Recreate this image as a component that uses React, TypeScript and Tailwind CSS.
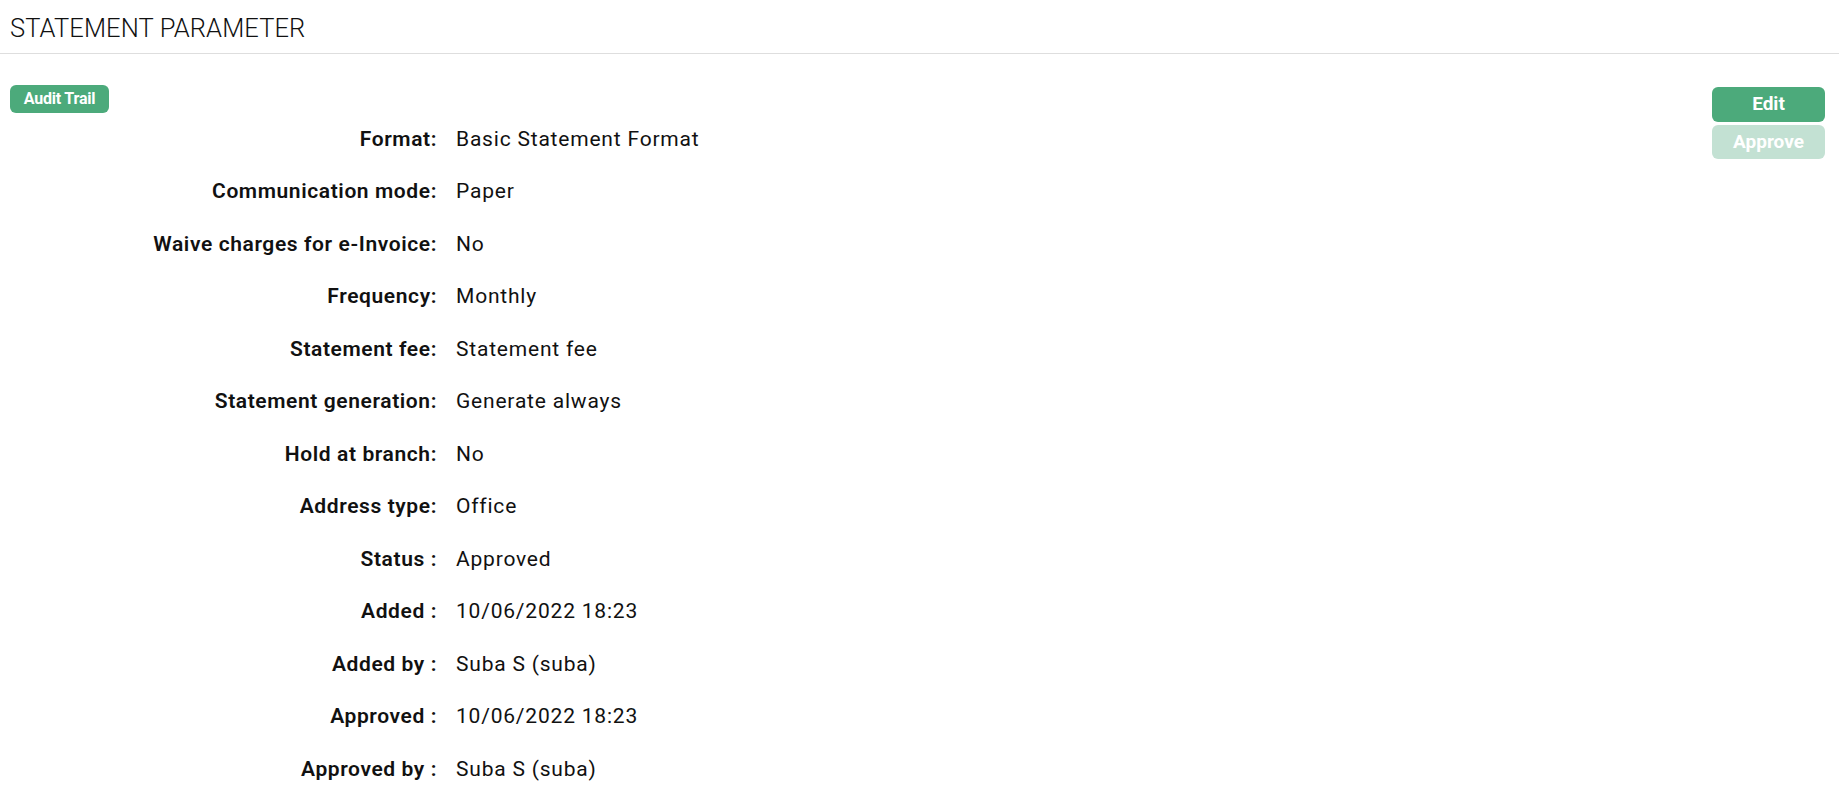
import React from "react";

const rows: { label: string; value: string }[] = [
    { label: "Format:", value: "Basic Statement Format" },
    { label: "Communication mode:", value: "Paper" },
    { label: "Waive charges for e-Invoice:", value: "No" },
    { label: "Frequency:", value: "Monthly" },
    { label: "Statement fee:", value: "Statement fee" },
    { label: "Statement generation:", value: "Generate always" },
    { label: "Hold at branch:", value: "No" },
    { label: "Address type:", value: "Office" },
    { label: "Status :", value: "Approved" },
    { label: "Added :", value: "10/06/2022 18:23" },
    { label: "Added by :", value: "Suba S (suba)" },
    { label: "Approved :", value: "10/06/2022 18:23" },
    { label: "Approved by :", value: "Suba S (suba)" },
];

const App = () => {
    return (
        <div
            className="min-h-screen bg-white text-[#111]"
            style={{ fontFamily: "Roboto, 'Liberation Sans', sans-serif" }}
        >
            <header className="flex h-[54px] items-center border-b border-[#dedede] px-[10px] pt-[4px]">
                <h1 className="text-[25.5px] font-light tracking-[0.1px] text-[#111]">
                    STATEMENT PARAMETER
                </h1>
            </header>

            <div className="flex pt-[31px] pl-[10px] pr-[14px]">
                <div className="flex-1">
                    <button
                        type="button"
                        className="flex h-[28px] w-[99px] items-center justify-center rounded-[6px] bg-[#4caa7b] text-[16px] font-bold tracking-[-0.2px] text-white"
                    >
                        Audit Trail
                    </button>

                    <dl className="grid grid-cols-[427px_1fr] gap-x-[19px]">
                        {rows.map((row, i) => (
                            <React.Fragment key={i}>
                                <dt className="flex h-[52.5px] items-center justify-end text-[21px] font-semibold tracking-[0.6px] text-[#111]">
                                    {row.label}
                                </dt>
                                <dd className="flex h-[52.5px] items-center text-[21px] tracking-[0.8px] text-[#111]">
                                    {row.value}
                                </dd>
                            </React.Fragment>
                        ))}
                    </dl>
                </div>

                <div className="flex w-[113px] flex-col gap-[3px] pt-[2px]">
                    <button
                        type="button"
                        className="flex h-[35px] items-center justify-center rounded-[6px] bg-[#4caa7b] text-[19px] font-bold text-white"
                    >
                        Edit
                    </button>
                    <button
                        type="button"
                        disabled
                        className="flex h-[34px] items-center justify-center rounded-[6px] bg-[#c3e1d3] text-[19px] font-bold text-white"
                    >
                        Approve
                    </button>
                </div>
            </div>
        </div>
    );
};

export default App;
